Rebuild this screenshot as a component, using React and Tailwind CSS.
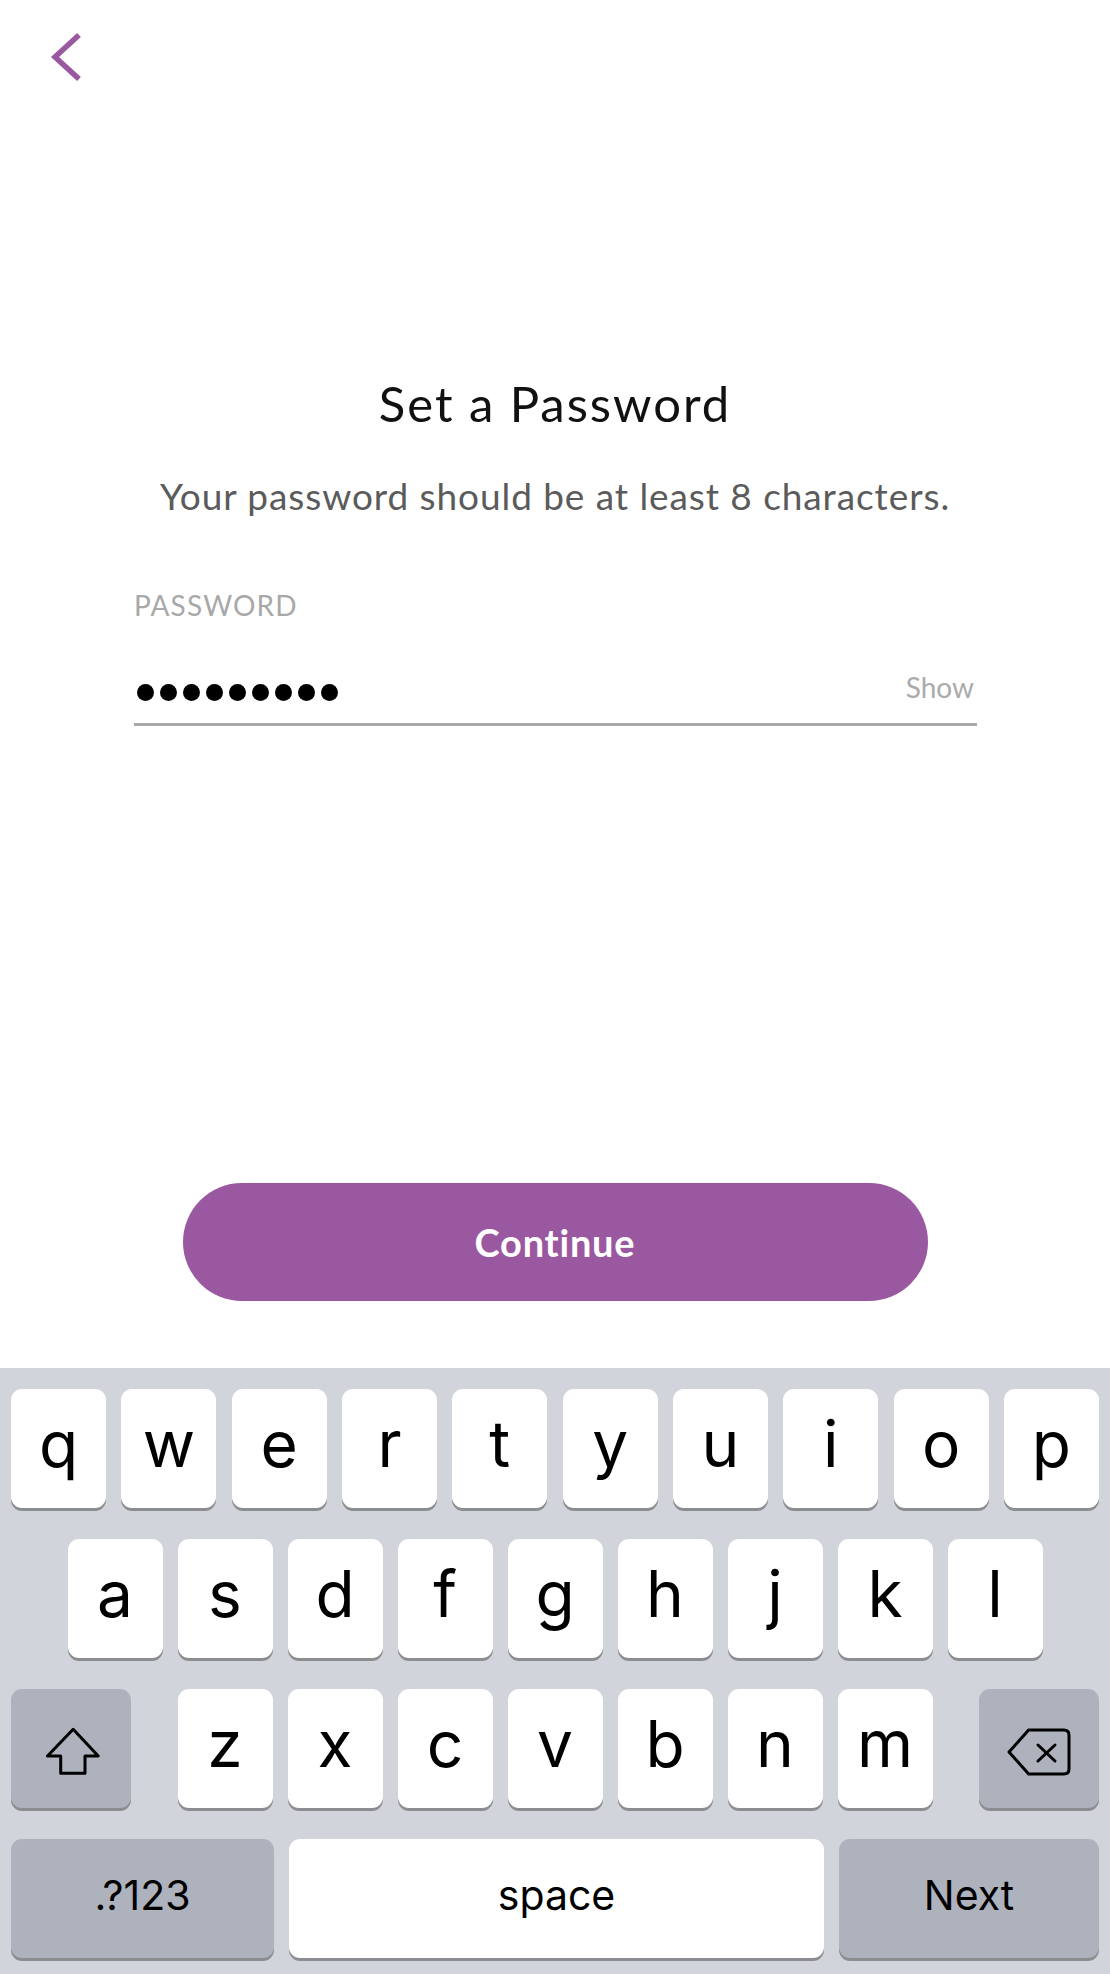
const ROW1 = ['q', 'w', 'e', 'r', 't', 'y', 'u', 'i', 'o', 'p'];
const ROW2 = ['a', 's', 'd', 'f', 'g', 'h', 'j', 'k', 'l'];
const ROW3 = ['z', 'x', 'c', 'v', 'b', 'n', 'm'];

function Key({ children, dark = false, className = '' }) {
  return (
    <div
      className={`flex h-[119px] items-center justify-center rounded-[11px] shadow-[0_3px_0_#8c8d91] ${
        dark ? 'bg-[#adb2bc]' : 'bg-white'
      } ${className}`}
    >
      {children}
    </div>
  );
}

function LetterKey({ letter }) {
  return (
    <Key className="w-[95px] pb-[9px] text-[64px] text-black">
      {letter}
    </Key>
  );
}

export default function App() {
  return (
    <div
      className="flex h-[1974px] w-[1110px] flex-col bg-white"
      style={{ fontFamily: 'Lato, "Open Sans", sans-serif' }}
    >
      <div className="flex h-[1368px] flex-col">
        {/* Back */}
        <button className="ml-[50px] mt-[30px] h-[54px] w-[34px]">
          <svg width="34" height="54" viewBox="0 0 34 54" fill="none">
            <path d="M29 5 L5 27 L29 49" stroke="#9a58a0" strokeWidth="5.5" />
          </svg>
        </button>

        <h1 className="mt-[290px] text-center text-[49px] leading-[1.2] tracking-[0.04em] text-[#111]">
          Set a Password
        </h1>
        <p className="mt-[41px] text-center text-[37px] leading-[1.2] tracking-[0.025em] text-[#5b5b5b]">
          Your password should be at least 8 characters.
        </p>

        {/* Password field */}
        <div className="ml-[134px] mr-[133px]">
          <div className="mt-[71px] text-[28px] leading-[1.2] tracking-[0.04em] text-[#a8a8a8]">PASSWORD</div>
          <div className="mt-[48px] flex items-end justify-between border-b-[3px] border-[#a9a9a9] pb-[19px]">
            <div className="mb-[3px] flex gap-[6px] pl-[3px]">
              {Array.from({ length: 9 }).map((_, i) => (
                <span key={i} className="block h-[17px] w-[17px] rounded-full bg-black" />
              ))}
            </div>
            <span className="mr-[3px] text-[28px] leading-[1.2] text-[#ababab]">Show</span>
          </div>
        </div>

        <button className="mx-auto mb-[67px] mt-auto h-[118px] w-[745px] rounded-full bg-[#9a58a0] text-[38px] font-bold tracking-[0.02em] text-white">
          Continue
        </button>
      </div>

      {/* Keyboard */}
      <div
        className="flex flex-1 flex-col gap-[31px] bg-[#d1d4db] px-[11px] pt-[21px]"
        style={{ fontFamily: 'Inter, "Liberation Sans", sans-serif' }}
      >
        <div className="flex justify-between">
          {ROW1.map((l) => (
            <LetterKey key={l} letter={l} />
          ))}
        </div>
        <div className="flex justify-center gap-[15px]">
          {ROW2.map((l) => (
            <LetterKey key={l} letter={l} />
          ))}
        </div>
        <div className="flex justify-between">
          <Key dark className="w-[120px]">
            <svg width="54" height="49" viewBox="0 0 54 49" fill="none" className="ml-[3px] mt-[6px]">
              <path
                d="M27.2 2.3 L52.2 29 L39 29 L39 46.3 L14.7 46.3 L14.7 29 L1.5 29 Z"
                stroke="#000"
                strokeWidth="3"
                strokeLinejoin="round"
              />
            </svg>
          </Key>
          <div className="flex gap-[15px]">
            {ROW3.map((l) => (
              <LetterKey key={l} letter={l} />
            ))}
          </div>
          <Key dark className="w-[120px]">
            <svg width="64" height="48" viewBox="0 0 64 48" fill="none" className="mt-[6px]">
              <path
                d="M2 24 L21.6 2 L57 2 Q62 2 62 7 L62 41 Q62 46 57 46 L21.6 46 Z"
                stroke="#000"
                strokeWidth="3"
                strokeLinejoin="round"
              />
              <path d="M31 17 L48 33 M48 17 L31 33" stroke="#000" strokeWidth="3" strokeLinecap="round" />
            </svg>
          </Key>
        </div>
        <div className="flex gap-[15px]">
          <Key dark className="w-[263px] pb-[6px] text-[41px] text-black">
            .?123
          </Key>
          <Key className="flex-1 pb-[6px] text-[41px] text-black">space</Key>
          <Key dark className="w-[260px] pb-[6px] text-[41px] text-black">
            Next
          </Key>
        </div>
      </div>
    </div>
  );
}
